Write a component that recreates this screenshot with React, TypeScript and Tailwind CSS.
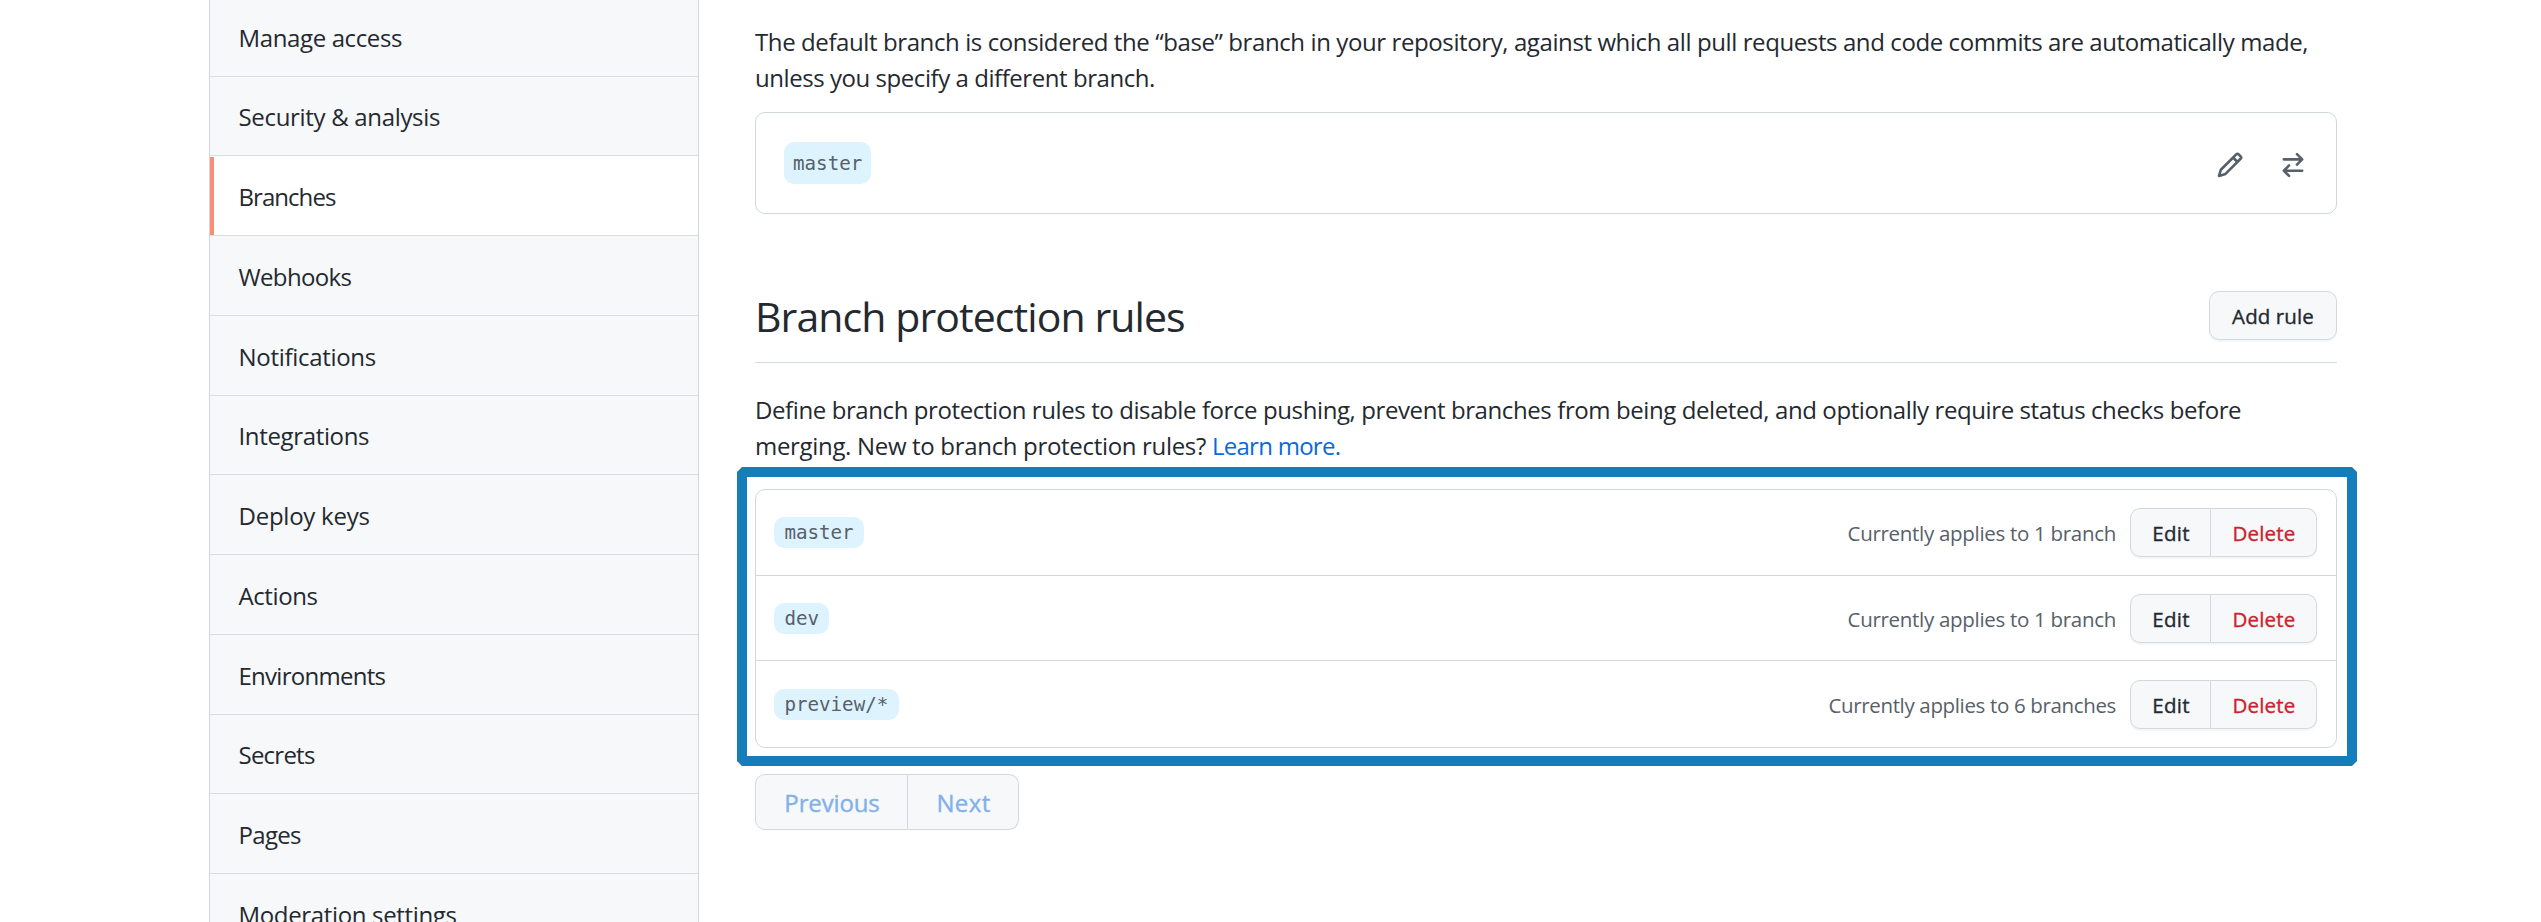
import type { ReactNode } from "react";

type NavItem = { label: string; tracking: string; active?: boolean };

const navItems: NavItem[] = [
  { label: "Manage access", tracking: "tracking-[-0.37px]" },
  { label: "Security & analysis", tracking: "tracking-[-0.32px]" },
  { label: "Branches", tracking: "tracking-[-0.95px]", active: true },
  { label: "Webhooks", tracking: "tracking-[-0.64px]" },
  { label: "Notifications", tracking: "tracking-[-0.3px]" },
  { label: "Integrations", tracking: "tracking-[-0.35px]" },
  { label: "Deploy keys", tracking: "tracking-[-0.25px]" },
  { label: "Actions", tracking: "tracking-[-0.4px]" },
  { label: "Environments", tracking: "tracking-[-0.73px]" },
  { label: "Secrets", tracking: "tracking-[-0.76px]" },
  { label: "Pages", tracking: "tracking-[-0.67px]" },
  { label: "Moderation settings", tracking: "tracking-[-0.34px]" },
];

const rules = [
  {
    pattern: "master",
    applies: "Currently applies to 1 branch",
    tracking: "tracking-[-0.3px]",
    row: "h-[86px] border-b pt-[18px]",
  },
  {
    pattern: "dev",
    applies: "Currently applies to 1 branch",
    tracking: "tracking-[-0.3px]",
    row: "h-[85px] border-b pt-[18px]",
  },
  {
    pattern: "preview/*",
    applies: "Currently applies to 6 branches",
    tracking: "tracking-[-0.35px]",
    row: "h-[86px] pt-[19px]",
  },
];

function PencilIcon() {
  return (
    <svg viewBox="0 0 16 16" className="size-7 fill-[#57606a]">
      <path
        fillRule="evenodd"
        d="M11.013 1.427a1.75 1.75 0 012.474 0l1.086 1.086a1.75 1.75 0 010 2.474l-8.61 8.61c-.21.21-.47.364-.756.445l-3.251.93a.75.75 0 01-.927-.928l.929-3.25a1.75 1.75 0 01.445-.758l8.61-8.61zm1.414 1.06a.25.25 0 00-.354 0L10.811 3.75l1.439 1.44 1.263-1.263a.25.25 0 000-.354l-1.086-1.086zM11.189 6.25L9.75 4.81l-6.286 6.287a.25.25 0 00-.064.108l-.558 1.953 1.953-.558a.249.249 0 00.108-.064l6.286-6.286z"
      />
    </svg>
  );
}

function SwitchIcon() {
  return (
    <svg viewBox="0 0 16 16" className="size-7 fill-[#57606a]">
      <path
        fillRule="evenodd"
        d="M5.22 14.78a.75.75 0 001.06-1.06L4.56 12h8.69a.75.75 0 000-1.5H4.56l1.72-1.72a.75.75 0 00-1.06-1.06l-3 3a.75.75 0 000 1.06l3 3zm5.56-6.5a.75.75 0 11-1.06-1.06l1.72-1.72H2.75a.75.75 0 010-1.5h8.69L9.72 2.28a.75.75 0 011.06-1.06l3 3a.75.75 0 010 1.06l-3 3z"
      />
    </svg>
  );
}

function BranchName({ className, children }: { className: string; children: ReactNode }) {
  return (
    <span
      className={`flex items-center rounded-[10px] bg-[#ddf4ff] pt-[1px] font-['DejaVu_Sans_Mono',monospace] text-[19.18px] leading-none text-[#57606a] ${className}`}
    >
      {children}
    </span>
  );
}

function Sidebar() {
  return (
    <nav className="h-[922px] w-[490px] shrink-0 overflow-hidden border-x border-[#d0d7de] bg-[#f6f8fa]">
      <div className="mt-[-3.15px] flex flex-col">
        {navItems.map((item) => (
          <a
            key={item.label}
            className={`flex h-[79.75px] shrink-0 border-b border-[#d8dee4] ${item.active ? "bg-white" : ""}`}
          >
            <span className={`mt-px w-[4px] shrink-0 ${item.active ? "bg-[#fd8c73]" : ""}`} />
            <span className={`flex items-center pt-[3px] pl-[24.5px] text-[24px] whitespace-nowrap ${item.tracking}`}>
              {item.label}
            </span>
          </a>
        ))}
      </div>
    </nav>
  );
}

export default function App() {
  return (
    <div className="flex h-[922px] overflow-hidden bg-white pl-[209px] font-['Open_Sans','Noto_Sans',sans-serif] text-[#24292f]">
      <Sidebar />
      <main className="ml-[56px] flex w-[1582px] shrink-0 flex-col pt-[24px]">
        <p className="text-[24px] leading-[36px] whitespace-nowrap">
          <span className="tracking-[-0.4px]">
            The default branch is considered the “base” branch in your repository, against which all pull requests and
            code commits are automatically made,
          </span>
          <br />
          <span className="tracking-[-0.445px]">unless you specify a different branch.</span>
        </p>

        <section className="mt-[16px] flex h-[102px] items-center justify-between rounded-[10px] border border-[#d0d7de] pr-[29px] pl-[28px]">
          <BranchName className="h-[42px] px-[9px]">master</BranchName>
          <div className="flex gap-[35px] pt-[4px]">
            <PencilIcon />
            <SwitchIcon />
          </div>
        </section>

        <header className="mt-[71px] flex h-[78px] items-start justify-between border-b border-[#d8dee4]">
          <h2 className="text-[41px] leading-[63px] font-normal tracking-[-0.91px]">Branch protection rules</h2>
          <button className="mt-[6px] flex h-[49px] w-[128px] items-center justify-center rounded-[10px] border border-[#d5d8da] bg-[#f6f8fa] pt-[1px] text-[20.5px] tracking-[0.1px] shadow-[0_2px_0_rgba(27,31,36,0.04)] [-webkit-text-stroke:0.35px]">
            Add rule
          </button>
        </header>

        <p className="mt-[29px] text-[24px] leading-[36px] whitespace-nowrap">
          <span className="tracking-[-0.403px]">
            Define branch protection rules to disable force pushing, prevent branches from being deleted, and optionally
            require status checks before
          </span>
          <br />
          <span className="tracking-[-0.32px]">merging. New to branch protection rules? </span>
          <a className="tracking-[-0.73px] text-[#0969da]">Learn more.</a>
        </p>

        <section className="relative mt-[25px]">
          <ul className="rounded-[10px] border border-[#d0d7de]">
            {rules.map((rule) => (
              <li key={rule.pattern} className={`flex justify-between border-[#d0d7de] pr-[19px] pl-[18px] ${rule.row}`}>
                <BranchName className="mt-[9px] h-[31px] px-[10.4px]">{rule.pattern}</BranchName>
                <div className="flex h-[49px] items-center text-[20.5px]">
                  <span className={`mr-[14px] pt-[1px] text-[#57606a] ${rule.tracking}`}>{rule.applies}</span>
                  <div className="flex h-[49px] rounded-[10px] shadow-[0_2px_0_rgba(27,31,36,0.04)] [-webkit-text-stroke:0.35px]">
                    <button className="w-[81px] rounded-l-[10px] border border-[#d5d8da] bg-[#f6f8fa] pt-[1px] pl-[1px] tracking-[0.27px]">
                      Edit
                    </button>
                    <button className="w-[106px] rounded-r-[10px] border border-l-0 border-[#d5d8da] bg-[#f6f8fa] pt-[1px] pl-[1px] tracking-[0.22px] text-[#cf222e]">
                      Delete
                    </button>
                  </div>
                </div>
              </li>
            ))}
          </ul>
          {/* Highlight frame with bevelled outer corners */}
          <div className="pointer-events-none absolute -top-[22px] -right-[20px] -bottom-[18px] -left-[18px] border-[10px] border-[#157dba] [clip-path:polygon(5px_0,calc(100%-5px)_0,100%_5px,100%_calc(100%-5px),calc(100%-5px)_100%,5px_100%,0_calc(100%-5px),0_5px)]" />
        </section>

        <div className="mt-[26px] flex h-[56px] text-[24px] text-[#80b1ea] [-webkit-text-stroke:0.35px]">
          <button className="w-[153px] rounded-l-[10px] border border-[#d5d8da] bg-[#f6f8fa] pt-[2px] pl-[1px] tracking-[-0.13px]">
            Previous
          </button>
          <button className="w-[111px] rounded-r-[10px] border border-l-0 border-[#d5d8da] bg-[#f6f8fa] pt-[2px] pl-[1px] tracking-[0.39px]">
            Next
          </button>
        </div>
      </main>
    </div>
  );
}
